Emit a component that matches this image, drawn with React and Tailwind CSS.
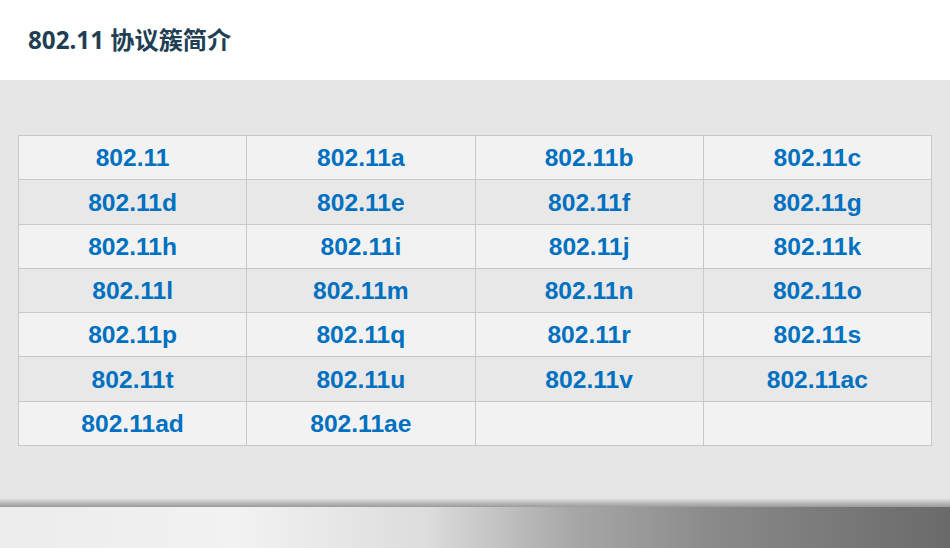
const rows = [
  ["802.11", "802.11a", "802.11b", "802.11c"],
  ["802.11d", "802.11e", "802.11f", "802.11g"],
  ["802.11h", "802.11i", "802.11j", "802.11k"],
  ["802.11l", "802.11m", "802.11n", "802.11o"],
  ["802.11p", "802.11q", "802.11r", "802.11s"],
  ["802.11t", "802.11u", "802.11v", "802.11ac"],
  ["802.11ad", "802.11ae", "", ""],
];

export default function App() {
  return (
    <div className="w-[950px] h-[548px] flex flex-col overflow-hidden bg-[#e6e6e6]">
      <div className="h-[80px] bg-white flex items-center pl-[28px] shrink-0">
        <h1 className="text-[24.2px] font-bold text-[#213e53] font-['Noto_Sans','Noto_Sans_CJK_SC',sans-serif] leading-none">
          802.11 协议簇简介
        </h1>
      </div>
      <div className="flex-1 pt-[55px] px-[18px]">
        <div className="grid grid-cols-4 border-t border-l border-[#c8c8c8] w-[914px]">
          {rows.flatMap((r, i) =>
            r.map((c, j) => (
              <div
                key={i + "-" + j}
                className={`h-[44.3px] pt-[2px] flex items-center justify-center border-r border-b border-[#c8c8c8] text-[24.6px] font-bold text-[#0070c0] font-['Liberation_Sans',Arial,sans-serif] ${
                  i % 2 === 0 ? "bg-[#f2f2f2]" : "bg-[#e8e8e8]"
                }`}
              >
                {c}
              </div>
            ))
          )}
        </div>
      </div>
      <div className="h-[9px] shrink-0 bg-gradient-to-b from-[#e6e6e6] to-[#9a9a9a]" />
      <div className="h-[41px] shrink-0 bg-[linear-gradient(90deg,#ececec_0%,#f2f2f2_25%,#dcdcdc_45%,#a8a8a8_60%,#8a8a8a_75%,#6a6a6a_100%)]" />
    </div>
  );
}
